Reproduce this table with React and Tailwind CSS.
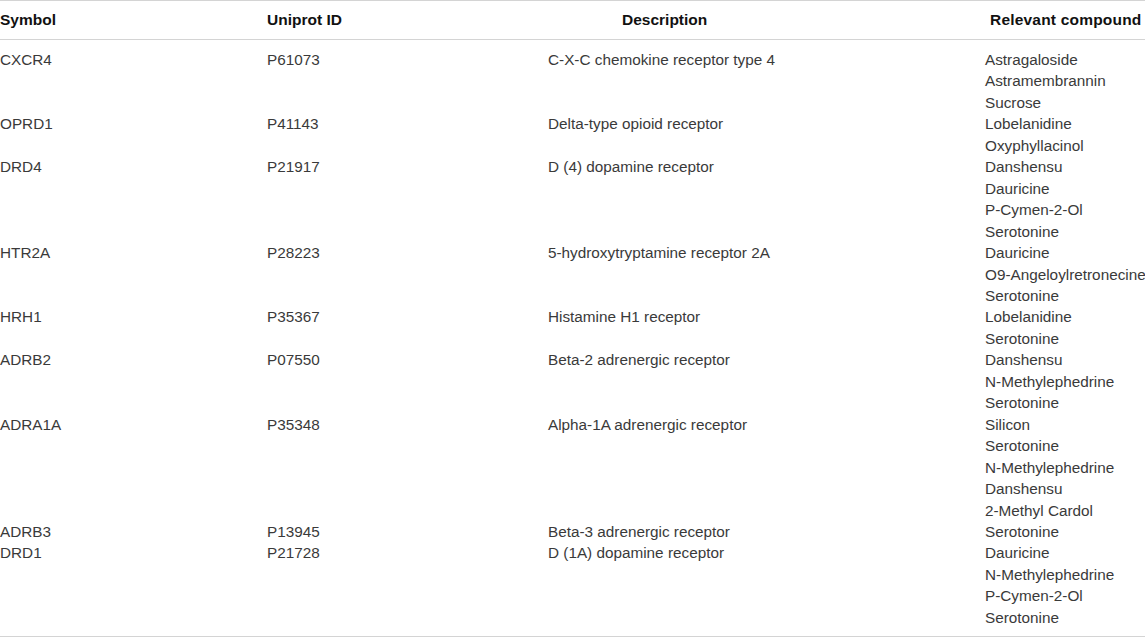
import React from "react";

const rows = [
  {
    symbol: "CXCR4",
    id: "P61073",
    desc: "C-X-C chemokine receptor type 4",
    compounds: ["Astragaloside", "Astramembrannin", "Sucrose"],
  },
  {
    symbol: "OPRD1",
    id: "P41143",
    desc: "Delta-type opioid receptor",
    compounds: ["Lobelanidine", "Oxyphyllacinol"],
  },
  {
    symbol: "DRD4",
    id: "P21917",
    desc: "D (4) dopamine receptor",
    compounds: ["Danshensu", "Dauricine", "P-Cymen-2-Ol", "Serotonine"],
  },
  {
    symbol: "HTR2A",
    id: "P28223",
    desc: "5-hydroxytryptamine receptor 2A",
    compounds: ["Dauricine", "O9-Angeloylretronecine", "Serotonine"],
  },
  {
    symbol: "HRH1",
    id: "P35367",
    desc: "Histamine H1 receptor",
    compounds: ["Lobelanidine", "Serotonine"],
  },
  {
    symbol: "ADRB2",
    id: "P07550",
    desc: "Beta-2 adrenergic receptor",
    compounds: ["Danshensu", "N-Methylephedrine", "Serotonine"],
  },
  {
    symbol: "ADRA1A",
    id: "P35348",
    desc: "Alpha-1A adrenergic receptor",
    compounds: [
      "Silicon",
      "Serotonine",
      "N-Methylephedrine",
      "Danshensu",
      "2-Methyl Cardol",
    ],
  },
  {
    symbol: "ADRB3",
    id: "P13945",
    desc: "Beta-3 adrenergic receptor",
    compounds: ["Serotonine"],
  },
  {
    symbol: "DRD1",
    id: "P21728",
    desc: "D (1A) dopamine receptor",
    compounds: ["Dauricine", "N-Methylephedrine", "P-Cymen-2-Ol", "Serotonine"],
  },
];

const App = () => {
  return (
    <div className="w-[1145px] h-[637px] bg-white overflow-hidden font-['Liberation_Sans',Arial,sans-serif]">
      <table className="w-full border-collapse table-fixed border-t border-b border-[#d4d4d4]">
        <colgroup>
          <col className="w-[267px]" />
          <col className="w-[281px]" />
          <col className="w-[437px]" />
          <col className="w-[160px]" />
        </colgroup>
        <thead>
          <tr className="border-b border-[#d4d4d4] h-[39px] text-[15.5px] font-bold text-[#111]">
            <th className="text-left p-0">Symbol</th>
            <th className="text-left p-0">Uniprot ID</th>
            <th className="text-left p-0 pl-[74px]">Description</th>
            <th className="text-left p-0 pl-[5px] whitespace-nowrap tracking-[0.2px]">
              Relevant compound
            </th>
          </tr>
        </thead>
        <tbody className="text-[15.3px] leading-[21.45px] text-[#3a3a3a]">
          {rows.map((r, i) => {
            const first = i === 0;
            const last = i === rows.length - 1;
            const pad = first ? "pt-[9px]" : last ? "pb-[8px]" : "";
            return (
              <tr key={r.symbol}>
                <td className={"align-top p-0 " + pad}>{r.symbol}</td>
                <td className={"align-top p-0 " + pad}>{r.id}</td>
                <td className={"align-top p-0 " + pad}>{r.desc}</td>
                <td className={"align-top p-0 whitespace-nowrap " + pad}>
                  {r.compounds.map((c, j) => (
                    <div key={j}>{c}</div>
                  ))}
                </td>
              </tr>
            );
          })}
        </tbody>
      </table>
    </div>
  );
};

export default App;
